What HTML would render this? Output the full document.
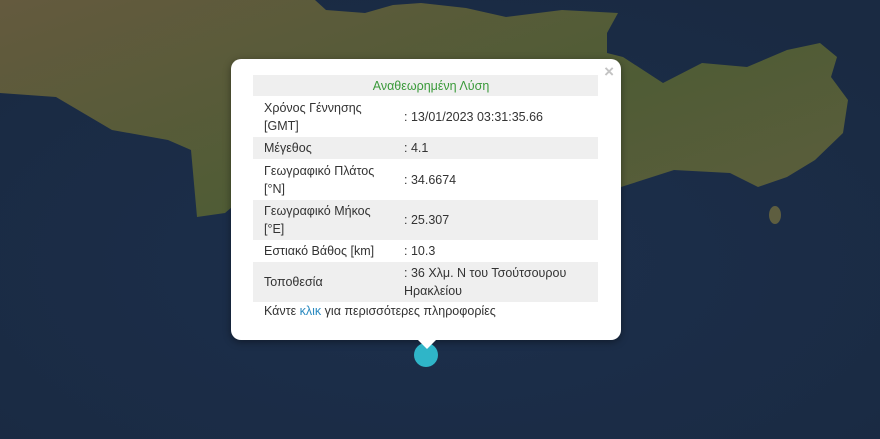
<!DOCTYPE html>
<html><head><meta charset="utf-8"><style>
body{margin:0;width:880px;height:439px;overflow:hidden;position:relative;background:#1c2d48;font-family:"Liberation Sans","DejaVu Sans",sans-serif}
svg.map{position:absolute;left:0;top:0}
.pop{position:absolute;left:231px;top:59px;width:390px;height:281px;background:#fff;border-radius:10px;box-shadow:0 2px 8px rgba(0,0,0,.4)}
.tip{position:absolute;left:416px;top:338px;width:0;height:0;border-left:11px solid transparent;border-right:11px solid transparent;border-top:11px solid #fff}
.dot{position:absolute;left:414px;top:343px;width:24px;height:24px;border-radius:50%;background:#2fb5c8}
.x{position:absolute;right:7px;top:3px;color:#c3c3c3;font-size:17px;font-weight:bold}
table{position:absolute;left:22px;top:16px;width:345px;border-collapse:collapse;font-size:12.5px;color:#333}
td{padding:0 0 0 11px;vertical-align:middle;line-height:18px}
tr.g{background:#efefef}
td.v{padding-left:2px}
.link{position:absolute;left:33px;top:245px;font-size:12.5px;color:#333}
</style></head><body>
<svg class="map" width="880" height="439">
<defs><linearGradient id="land" x1="0" y1="0" x2="1" y2="1"><stop offset="0" stop-color="#645a3e"/><stop offset=".5" stop-color="#4f5c35"/><stop offset="1" stop-color="#625e40"/></linearGradient>
<radialGradient id="sea" cx=".5" cy=".6" r=".7"><stop offset="0" stop-color="#1c2f4c"/><stop offset="1" stop-color="#1a2a42"/></radialGradient></defs>
<rect width="880" height="439" fill="url(#sea)"/>
<polygon fill="url(#land)" points="0,0 315,0 326,10 365,13 393,5 421,3 466,8 506,17 562,10 618,13 607,33 607,53 623,57 663,83 702,63 747,67 787,50 820,43 837,57 831,77 848,100 843,133 815,160 787,177 758,187 730,173 674,170 621,187 600,300 232,300 232,207 225,213 197,217 191,150 168,140 112,130 56,97 0,93"/>
<ellipse cx="775" cy="215" rx="6" ry="9" fill="#5e5e40"/>
</svg>
<div class="pop"><div class="x">×</div>
<table>
<tr class="g"><td colspan="2" style="text-align:center;color:#3a9a3a;height:21px">Αναθεωρημένη Λύση</td></tr>
<tr><td style="height:41px;width:138px">Χρόνος Γέννησης<br>[GMT]</td><td class="v">: 13/01/2023 03:31:35.66</td></tr>
<tr class="g"><td style="height:22px">Μέγεθος</td><td class="v">: 4.1</td></tr>
<tr><td style="height:41px">Γεωγραφικό Πλάτος<br>[°N]</td><td class="v">: 34.6674</td></tr>
<tr class="g"><td style="height:40px">Γεωγραφικό Μήκος<br>[°E]</td><td class="v">: 25.307</td></tr>
<tr><td style="height:22px">Εστιακό Βάθος [km]</td><td class="v">: 10.3</td></tr>
<tr class="g"><td style="height:40px">Τοποθεσία</td><td class="v">: 36 Χλμ. Ν του Τσούτσουρου<br>Ηρακλείου</td></tr>
</table>
<div class="link">Κάντε <span style="color:#2a8ac0">κλικ</span> για περισσότερες πληροφορίες</div>
</div>
<div class="dot"></div>
<div class="tip"></div>
</body></html>
